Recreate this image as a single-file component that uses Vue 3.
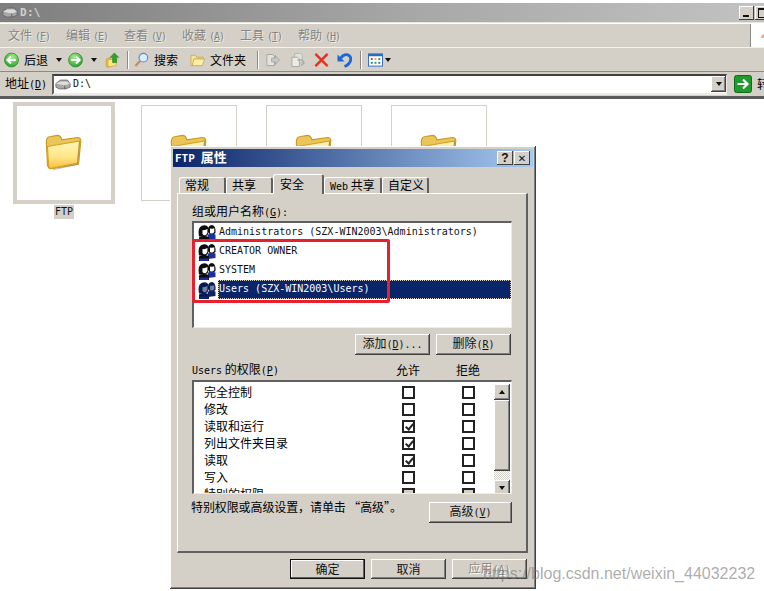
<script setup>
const menus = [['文件', 'F'], ['编辑', 'E'], ['查看', 'V'], ['收藏', 'A'], ['工具', 'T'], ['帮助', 'H']]
const thumbs = [
  { name: 'FTP', active: true },
  { name: '' },
  { name: '' },
  { name: '' }
]
const tabs = [
  { label: '常规', w: 47 },
  { label: '共享', w: 47 },
  { label: '安全', w: 51, active: true },
  { label: 'Web 共享', w: 58 },
  { label: '自定义', w: 47 }
]
const users = [
  { label: 'Administrators (SZX-WIN2003\\Administrators)' },
  { label: 'CREATOR OWNER' },
  { label: 'SYSTEM' },
  { label: 'Users (SZX-WIN2003\\Users)', selected: true }
]
const perms = [
  { label: '完全控制' },
  { label: '修改' },
  { label: '读取和运行', allow: true },
  { label: '列出文件夹目录', allow: true },
  { label: '读取', allow: true },
  { label: '写入' },
  { label: '特别的权限', gray: true }
]
</script>

<template>
  <div class="screen">
    <svg class="defs" width="0" height="0">
      <defs>
        <linearGradient id="fold" x1="0" y1="0" x2="0" y2="1">
          <stop offset="0" stop-color="#fff6b8" />
          <stop offset="0.6" stop-color="#ffe484" />
          <stop offset="1" stop-color="#f6bd3a" />
        </linearGradient>
        <radialGradient id="green" cx="0.4" cy="0.3" r="0.8">
          <stop offset="0" stop-color="#a8ec8a" />
          <stop offset="1" stop-color="#1c9a24" />
        </radialGradient>
        <symbol id="folder" viewBox="0 0 36 36">
          <path d="M3 9 Q3 4 7 4 L13 3 Q16 3 17 7 L31 5 Q34 5 34 8 L32 29 L7 33 Q5 33 4 30 Z" fill="#ecc55a" stroke="#c99a1c" stroke-width="1" />
          <path d="M4 13 L33 8 L31 28 L7 33 Q5 33 5 30 Z" fill="url(#fold)" stroke="#d8a020" stroke-width="1" />
          <path d="M33 8 L31 29 L9 34" fill="none" stroke="#8a8a80" stroke-width="1" opacity="0.5" />
        </symbol>
        <symbol id="drive" viewBox="0 0 18 12">
          <path d="M1 5 L6 1 H14 L17 5 V9 L12 11 H5 L1 9 Z" fill="#a8a8a8" stroke="#5c5c5c" stroke-width="0.8" />
          <path d="M1 5 L11 7 L17 5 L13 2.5 H6 Z" fill="#dcdcdc" />
          <path d="M11 7 V11" stroke="#444" stroke-width="0.8" />
        </symbol>
        <symbol id="round" viewBox="0 0 16 16">
          <circle cx="8" cy="8" r="7.4" fill="url(#green)" stroke="#2b8a2e" stroke-width="0.8" />
          <path d="M3.5 8 H12 M8.5 4.2 L12.4 8 L8.5 11.8" fill="none" stroke="#fff" stroke-width="2.2" />
        </symbol>
        <symbol id="people" viewBox="0 0 18 18">
          <path d="M10 16 V10.5 Q13.5 9 17.5 10.5 V15 Z" fill="var(--body)" />
          <path d="M10 8 Q9.5 1 14 1 Q18 1.500 17.5 9 L16 10 H11.500 Z" fill="var(--hair)" />
          <path d="M12 4.500 Q15 5 16.300 4.200 V8 Q14.500 10.500 12 9 Z" fill="var(--face)" />
          <path d="M1 18 V13.500 Q3 11.500 6 12 Q9.500 11.500 11 13.500 V18 Z" fill="var(--hair)" />
          <path d="M1.500 18 V15.500 H10.500 V18 Z" fill="var(--body)" />
          <path d="M1 12.500 Q-0.500 4 3.500 2 Q8 0 10.500 3.500 Q11 9 9.500 11.500 L6 12.500 Z" fill="var(--hair)" />
          <path d="M4.500 6 Q7 6.500 9.500 5 Q10 9 8 11 Q6 12 4.500 10 Z" fill="var(--face)" />
        </symbol>
      </defs>
    </svg>

    <div class="titlebar">
      <svg class="ic-drive"><use href="#drive" /></svg>
      <span class="title-text">D:\</span>
      <div class="win-btns">
        <span class="btn-box"><i class="min-glyph"></i></span>
        <span class="btn-box"><i class="max-glyph"></i></span>
      </div>
    </div>

    <div class="menubar">
      <div class="menus">
        <span v-for="m in menus" :key="m[0]" class="menu">{{ m[0] }}<span class="mono paren">(<u>{{ m[1] }}</u>)</span></span>
      </div>
      <div class="throbber">
        <svg width="12" height="16" viewBox="0 0 12 16"><path d="M0 15 L6 2 L12 2 L12 15 Z" fill="#f4a878" /><path d="M0 15 L3 9 L8 15 Z" fill="#78b4f0" /></svg>
      </div>
    </div>

    <div class="toolbar">
      <svg class="ic16 back"><use href="#round" /></svg>
      <span class="tb-text">后退</span>
      <i class="caret c-back"></i>
      <svg class="ic16 fwd"><use href="#round" /></svg>
      <i class="caret c-fwd"></i>
      <svg class="ic16 up" viewBox="0 0 16 18">
        <path d="M1 8 L6 6 V16 L3 17 Q1 17 1 15 Z" fill="#f0c850" stroke="#b88a18" stroke-width="0.7" />
        <path d="M3 9 L13 7 L12 15 L3 17 Z" fill="#ffe78a" stroke="#c99a1c" stroke-width="0.7" />
        <path d="M10 1 L15 6 H12.5 V12 H8 V6 H5.5 Z" fill="#2fa32f" stroke="#1a701a" stroke-width="0.5" />
      </svg>
      <i class="sep s1"></i>
      <svg class="ic16 search" viewBox="0 0 16 16">
        <path d="M6.5 9 L1.5 14.5" stroke="#c88c50" stroke-width="2.4" />
        <circle cx="10" cy="5.5" r="4.6" fill="#d8ecfc" stroke="#6488b8" stroke-width="1.2" />
      </svg>
      <span class="tb-text t-search">搜索</span>
      <svg class="ic16 folders" viewBox="0 0 16 16">
        <path d="M1 3 H6 L7 5 H14 V7 H5 L3 14 H1 Z" fill="#f8e29a" stroke="#c4a040" stroke-width="0.8" />
        <path d="M4 7 H15.5 L13 14 H2.5 Z" fill="#ffeea8" stroke="#c4a040" stroke-width="0.8" />
      </svg>
      <span class="tb-text t-folders">文件夹</span>
      <i class="sep s2"></i>
      <svg class="ic16 move" viewBox="0 0 16 16">
        <path d="M2 2 H8 L10 4 V14 H2 Z" fill="#e4e2dc" stroke="#a4a4a0" />
        <path d="M7 6 H11 V3 L15.5 8 L11 13 V10 H7 Z" fill="#c8c8c4" stroke="#989894" stroke-width="0.7" />
      </svg>
      <svg class="ic16 copy" viewBox="0 0 16 16">
        <path d="M5 1 H11 L13 3 V11 H5 Z" fill="#e4e2dc" stroke="#b4b4b0" />
        <path d="M2 5 H8 L10 7 V15 H2 Z" fill="#ecebe6" stroke="#a4a4a0" />
        <path d="M8 8 L13 8 L15 11 L12 14" fill="none" stroke="#a8a8a4" stroke-width="1.4" />
      </svg>
      <svg class="ic16 del" viewBox="0 0 16 16">
        <path d="M1.5 1.5 L14.5 14.5 M14.5 1.5 L1.5 14.5" stroke="#e8301c" stroke-width="2.6" />
      </svg>
      <svg class="ic16 undo" viewBox="0 0 16 16">
        <path d="M4 6 Q7 1.5 11.5 2.5 Q15.5 4 14.5 8.5 Q13 13 8 15" fill="none" stroke="#1c68d8" stroke-width="3" />
        <path d="M0.5 2 V9.5 H8 Z" fill="#1c68d8" />
      </svg>
      <i class="sep s3"></i>
      <svg class="ic16 views" viewBox="0 0 16 16">
        <rect x="0.5" y="1.5" width="15" height="13" fill="#fff" stroke="#2a6ac8" />
        <rect x="0.5" y="1.5" width="15" height="2.5" fill="#2a6ac8" />
        <path d="M3 6 h2 v2 h-2 Z" fill="#d83020" /><path d="M7 6 h2 v2 h-2 Z" fill="#e8a820" /><path d="M11 6 h2 v2 h-2 Z" fill="#2a9a30" />
        <path d="M3 10 h2 v2 h-2 Z" fill="#2a6ac8" /><path d="M7 10 h2 v2 h-2 Z" fill="#2a9a30" /><path d="M11 10 h2 v2 h-2 Z" fill="#2a6ac8" />
      </svg>
      <i class="caret c-views"></i>
    </div>

    <div class="addressbar">
      <span class="addr-label">地址<span class="mono">(<u>D</u>)</span></span>
      <div class="addr-input">
        <svg class="ic-drive"><use href="#drive" /></svg>
        <span class="mono addr-text">D:\</span>
        <span class="combo-btn raised"><i class="caret dark"></i></span>
      </div>
      <svg class="go" viewBox="0 0 18 18">
        <rect x="0.5" y="0.5" width="17" height="17" rx="2" fill="#1f9a2c" stroke="#0f6a1a" />
        <path d="M3.5 9 H13 M9 4.5 L13.5 9 L9 13.5" fill="none" stroke="#fff" stroke-width="2.2" />
      </svg>
      <span class="go-text">转</span>
    </div>

    <div class="content">
      <div class="thumbs">
        <div v-for="(t, i) in thumbs" :key="i" class="thumb-item">
          <div class="thumb" :class="{ active: t.active }">
            <svg class="big-folder"><use href="#folder" /></svg>
          </div>
          <span v-if="t.name" class="thumb-name mono">{{ t.name }}</span>
        </div>
      </div>

      <section class="dialog raised">
        <header class="dlg-title">
          <span class="dlg-title-text"><span class="mono">FTP</span> 属性</span>
          <span class="btn-box b-help">?</span>
          <span class="btn-box b-close">✕</span>
        </header>

        <div class="tabs">
          <span v-for="t in tabs" :key="t.label" class="tab" :class="{ active: t.active }" :style="{ width: t.w + 'px' }">
            <template v-if="t.label.startsWith('Web')"><span class="mono">Web</span> 共享</template>
            <template v-else>{{ t.label }}</template>
          </span>
        </div>

        <div class="panel">
          <div class="field-label">组或用户名称<span class="mono">(<u>G</u>):</span></div>
          <div class="listbox users">
            <div v-for="u in users" :key="u.label" class="user-row" :class="{ selected: u.selected }">
              <svg class="people"><use href="#people" /></svg>
              <span class="user-name mono">{{ u.label }}</span>
            </div>
          </div>

          <div class="row-buttons">
            <button class="btn raised">添加<span class="mono">(<u>D</u>)...</span></button>
            <button class="btn raised">删除<span class="mono">(<u>R</u>)</span></button>
          </div>

          <div class="perm-head">
            <span class="perm-title"><span class="mono">Users</span> 的权限<span class="mono">(<u>P</u>)</span></span>
            <span class="col">允许</span>
            <span class="col">拒绝</span>
          </div>

          <div class="listbox perms">
            <div class="perm-rows">
              <div v-for="p in perms" :key="p.label" class="perm-row">
                <span class="perm-name">{{ p.label }}</span>
                <span class="col"><i class="check" :class="{ on: p.allow, gray: p.gray }"></i></span>
                <span class="col"><i class="check" :class="{ gray: p.gray }"></i></span>
              </div>
            </div>
            <div class="scroll">
              <span class="sb-btn raised"><i class="caret dark up-caret"></i></span>
              <span class="sb-thumb raised"></span>
              <span class="sb-track"></span>
              <span class="sb-btn raised"><i class="caret dark"></i></span>
            </div>
          </div>

          <div class="advanced">
            <span>特别权限或高级设置，请单击 “高级”。</span>
            <button class="btn raised adv-btn">高级<span class="mono">(<u>V</u>)</span></button>
          </div>
        </div>

        <div class="dlg-actions">
          <button class="btn raised default">确定</button>
          <button class="btn raised">取消</button>
          <button class="btn raised disabled">应用<span class="mono">(<u>A</u>)</span></button>
        </div>

        <div class="annotation"></div>
      </section>

      <div class="watermark">https://blog.csdn.net/weixin_44032232</div>
    </div>
  </div>
</template>

<style>
html, body { margin: 0; background: #fff; overflow: hidden; }
</style>

<style scoped>
.screen {
  width: 764px;
  height: 591px;
  overflow: hidden;
  position: relative;
  background: #fff;
  font-family: "Noto Sans CJK SC", "Liberation Sans", sans-serif;
  font-size: 12px;
  line-height: 14px;
  color: #000;
  box-sizing: border-box;
  padding-top: 3px;
  --hair: #0c0c0c;
  --face: #fff;
  --body: #1c2f9c;
}
.defs { position: absolute; }
.mono { font-family: "DejaVu Sans Mono", "Liberation Mono", monospace; font-size: 10px; }
u { text-underline-offset: 1px; }
i { display: block; }

.raised {
  background: #d4d0c8;
  box-shadow: inset -1px -1px #404040, inset 1px 1px #fff, inset -2px -2px #808080, inset 2px 2px #d4d0c8;
}

.titlebar {
  height: 19px;
  display: flex;
  align-items: center;
  background: linear-gradient(90deg, #7e7e7e 0, #a8a8a8 55%, #c2c2c2 100%);
  padding-left: 2px;
  border-bottom: 1px solid #e8e6e0;
}
.ic-drive { width: 16px; height: 11px; flex: none; }
.title-text { font: bold 11px "DejaVu Sans Mono", monospace; color: #d4d0c8; margin-left: 2px; letter-spacing: 0.3px; }
.win-btns { margin-left: auto; display: flex; gap: 1px; margin-right: -6px; }
.btn-box {
  width: 15px;
  height: 14px;
  background: #d4d0c8;
  box-shadow: inset -1px -1px #404040, inset 1px 1px #fff;
  display: flex;
  align-items: center;
  justify-content: center;
  color: #111;
  position: relative;
}
.min-glyph { width: 6px; height: 2px; background: #111; position: absolute; left: 4px; bottom: 3px; }
.max-glyph { width: 8px; height: 7px; border: 1px solid #111; border-top-width: 2px; }

.menubar {
  height: 23px;
  margin-top: 1px;
  display: flex;
  background: #d4d0c8;
  border-bottom: 1px solid #f4f2ee;
}
.menus { display: flex; flex: 1; padding-left: 8px; align-items: center; }
.menu { width: 58px; flex: none; color: #858581; text-shadow: 1px 1px 0 #eeece6; white-space: nowrap; }
.paren { margin-left: 3px; letter-spacing: -1px; }
.throbber { flex: none; overflow: hidden; background: #fff; border-left: 1px solid #8a8a86; display: flex; align-items: center; padding-left: 10px; box-sizing: content-box; width: 3px; }

.toolbar {
  height: 23px;
  display: flex;
  align-items: center;
  background: #d4d0c8;
  border-bottom: 1px solid #8a8a86;
  padding-left: 4px;
  box-sizing: content-box;
}
.ic16 { width: 15px; height: 16px; flex: none; }
.back { transform: scaleX(-1); }
.tb-text { margin-left: 5px; white-space: nowrap; }
.caret { width: 0; height: 0; border: 3px solid transparent; border-top: 4px solid #111; border-bottom: 0; flex: none; }
.c-back { margin-left: 8px; }
.fwd { margin-left: 6px; }
.c-fwd { margin-left: 8px; }
.up { margin-left: 8px; }
.sep { width: 1px; height: 18px; background: #8a8a86; box-shadow: 1px 0 #fff; flex: none; }
.s1 { margin-left: 7px; }
.search { margin-left: 6px; }
.t-search { margin-left: 5px; }
.folders { margin-left: 12px; }
.t-folders { margin-left: 5px; }
.s2 { margin-left: 11px; }
.move { margin-left: 7px; }
.copy { margin-left: 10px; }
.del { margin-left: 9px; }
.undo { margin-left: 8px; }
.s3 { margin-left: 8px; }
.views { margin-left: 7px; }
.c-views { margin-left: 2px; }

.addressbar {
  height: 24px;
  display: flex;
  align-items: center;
  background: #d4d0c8;
  border-bottom: 3px solid #5a5a5a;
  box-sizing: content-box;
}
.addr-label { width: 52px; flex: none; padding-left: 5px; box-sizing: border-box; white-space: nowrap; }
.addr-input {
  width: 675px;
  height: 21px;
  box-sizing: border-box;
  flex: none;
  background: #fff;
  border-top: 2px solid #404040;
  border-left: 2px solid #606060;
  border-bottom: 2px solid #eeece6;
  border-right: 1px solid #eeece6;
  display: flex;
  align-items: center;
  padding-left: 1px;
}
.addr-text { margin-left: 2px; color: #111; }
.combo-btn { margin-left: auto; width: 15px; height: 16px; display: flex; align-items: center; justify-content: center; }
.go { width: 18px; height: 18px; margin-left: 7px; flex: none; }
.go-text { margin-left: 5px; white-space: nowrap; }

.content { position: relative; }
.thumbs { display: flex; padding: 3px 0 0 13px; align-items: flex-start; }
.thumb-item { width: 125px; display: flex; flex-direction: column; align-items: flex-start; flex: none; }
.thumb-item:first-child { align-items: center; width: 102px; margin-right: 26px; }
.thumb {
  width: 96px;
  height: 96px;
  box-sizing: border-box;
  border: 1px solid #d4d0c8;
  margin-top: 3px;
  display: flex;
  align-items: center;
  justify-content: center;
  background: #fff;
}
.thumb.active { width: 102px; height: 102px; border-width: 4px; margin-top: 0; }
.big-folder { width: 40px; height: 40px; margin-top: -2px; margin-left: -2px; }
.thumb-name { background: #d4d0c8; padding: 0 1px; margin-top: 1px; line-height: 14px; color: #111; }

.dialog {
  position: absolute;
  left: 170px;
  top: 47px;
  width: 366px;
  height: 443px;
  padding: 3px 8px 0;
  box-sizing: border-box;
}
.dlg-title {
  height: 18px;
  margin: 0 -5px;
  padding: 0 3px 0 2px;
  display: flex;
  align-items: center;
  gap: 1px;
  color: #fff;
  font-weight: 700;
  background: linear-gradient(90deg, #0a246a, #a6caf0);
}
.dlg-title .mono { font-weight: 700; font-size: 11px; }
.dlg-title-text { margin-right: auto; font-size: 13px; word-spacing: 3px; padding-bottom: 1px; }
.b-help { width: 16px; font: bold 12px "Liberation Sans", sans-serif; }
.b-close { width: 16px; font: bold 10px "DejaVu Sans", sans-serif; }

.tabs { display: flex; height: 19px; align-items: flex-end; margin-top: 7px; padding-left: 1px; }
.tab {
  height: 16px;
  flex: none;
  box-sizing: border-box;
  text-align: left;
  padding: 0 0 0 5px;
  line-height: 13px;
  background: #d4d0c8;
  border-top: 1px solid #fff;
  border-left: 1px solid #fff;
  border-right: 2px solid #606060;
  border-radius: 3px 3px 0 0;
  white-space: nowrap;
}
.tab.active { height: 20px; position: relative; z-index: 1; margin-bottom: -1px; padding: 2px 0 0 6px; }

.panel {
  height: 360px;
  box-sizing: border-box;
  margin: 0 0 0 -1px;
  padding: 10px 15px 0 14px;
  border-top: 1px solid #fff;
  border-left: 1px solid #fff;
  border-right: 2px solid #606060;
  border-bottom: 2px solid #606060;
}
.field-label { height: 17px; }
.listbox {
  background: #fff;
  box-sizing: border-box;
  border-top: 2px solid #606060;
  border-left: 2px solid #606060;
  border-right: 1px solid #eeece6;
  border-bottom: 1px solid #eeece6;
  width: 320px;
}
.users { height: 107px; }
.user-row { height: 19px; display: flex; align-items: center; padding-left: 4px; }
.people { width: 18px; height: 18px; flex: none; }
.user-name { margin-left: 2px; padding: 0 1px 1px; line-height: 18px; flex: 1; color: #111; }
.selected { --hair: #0a1a50; --face: #7080a8; --body: #0a246a; }
.selected .user-name { background: #0a246a; color: #fff; outline: 1px dotted #d4d0c8; outline-offset: -1px; }

.row-buttons { display: flex; justify-content: flex-end; gap: 6px; margin-top: 6px; padding-right: 1px; width: 319px; }
.btn {
  width: 75px;
  height: 21px;
  border: 0;
  padding: 0 0 1px;
  font: inherit;
  color: #111;
}
.perm-head { display: flex; align-items: center; height: 25px; padding-top: 4px; box-sizing: border-box; }
.perm-title { width: 186px; flex: none; }
.col { width: 60px; display: flex; justify-content: center; flex: none; }
.perms { height: 114px; display: flex; overflow: hidden; padding: 2px 1px 0 0; }
.perm-rows { flex: 1; min-width: 0; padding-left: 10px; }
.perm-row { height: 17px; display: flex; align-items: center; }
.perm-name { width: 174px; flex: none; padding-bottom: 2px; }
.check {
  width: 13px;
  height: 13px;
  box-sizing: border-box;
  border: 2px solid #222;
  background: #fff;
  position: relative;
}
.check.gray { background: #d4d0c8; }
.check.on::after {
  content: "";
  position: absolute;
  left: 3px;
  top: 0;
  width: 3px;
  height: 6px;
  border: solid #222;
  border-width: 0 2px 2px 0;
  transform: rotate(40deg);
}
.scroll { width: 16px; flex: none; display: flex; flex-direction: column; }
.sb-btn { height: 16px; flex: none; display: flex; align-items: center; justify-content: center; }
.up-caret { transform: rotate(180deg); }
.sb-thumb { height: 71px; flex: none; }
.sb-track {
  height: 9px;
  flex: none;
  background: repeating-conic-gradient(#d4d0c8 0 25%, #fff 0 50%) 0 0 / 2px 2px;
}

.advanced { display: flex; justify-content: space-between; align-items: flex-start; margin-top: 8px; width: 320px; }
.advanced > span { margin: -2px 0 0 -1px; letter-spacing: -0.1px; }
.adv-btn { width: 83px; flex: none; }

.dlg-actions { display: flex; justify-content: flex-end; gap: 6px; margin-top: 6px; margin-right: 1px; }
.dlg-actions .btn { height: 20px; }
.default { box-shadow: inset 0 0 0 1px #111, inset -2px -2px #606060, inset 2px 2px #fff; }
.disabled { color: #8a8a86; text-shadow: 1px 1px 0 #fff; }

.annotation {
  position: absolute;
  left: 22px;
  top: 93px;
  width: 198px;
  height: 64px;
  box-sizing: border-box;
  border: 3px solid #e8202e;
  border-radius: 2px;
  pointer-events: none;
}
.watermark {
  position: absolute;
  left: 483px;
  top: 465px;
  font: 16px/20px "Liberation Sans", sans-serif;
  color: rgba(120, 120, 120, 0.62);
  white-space: nowrap;
}
</style>
